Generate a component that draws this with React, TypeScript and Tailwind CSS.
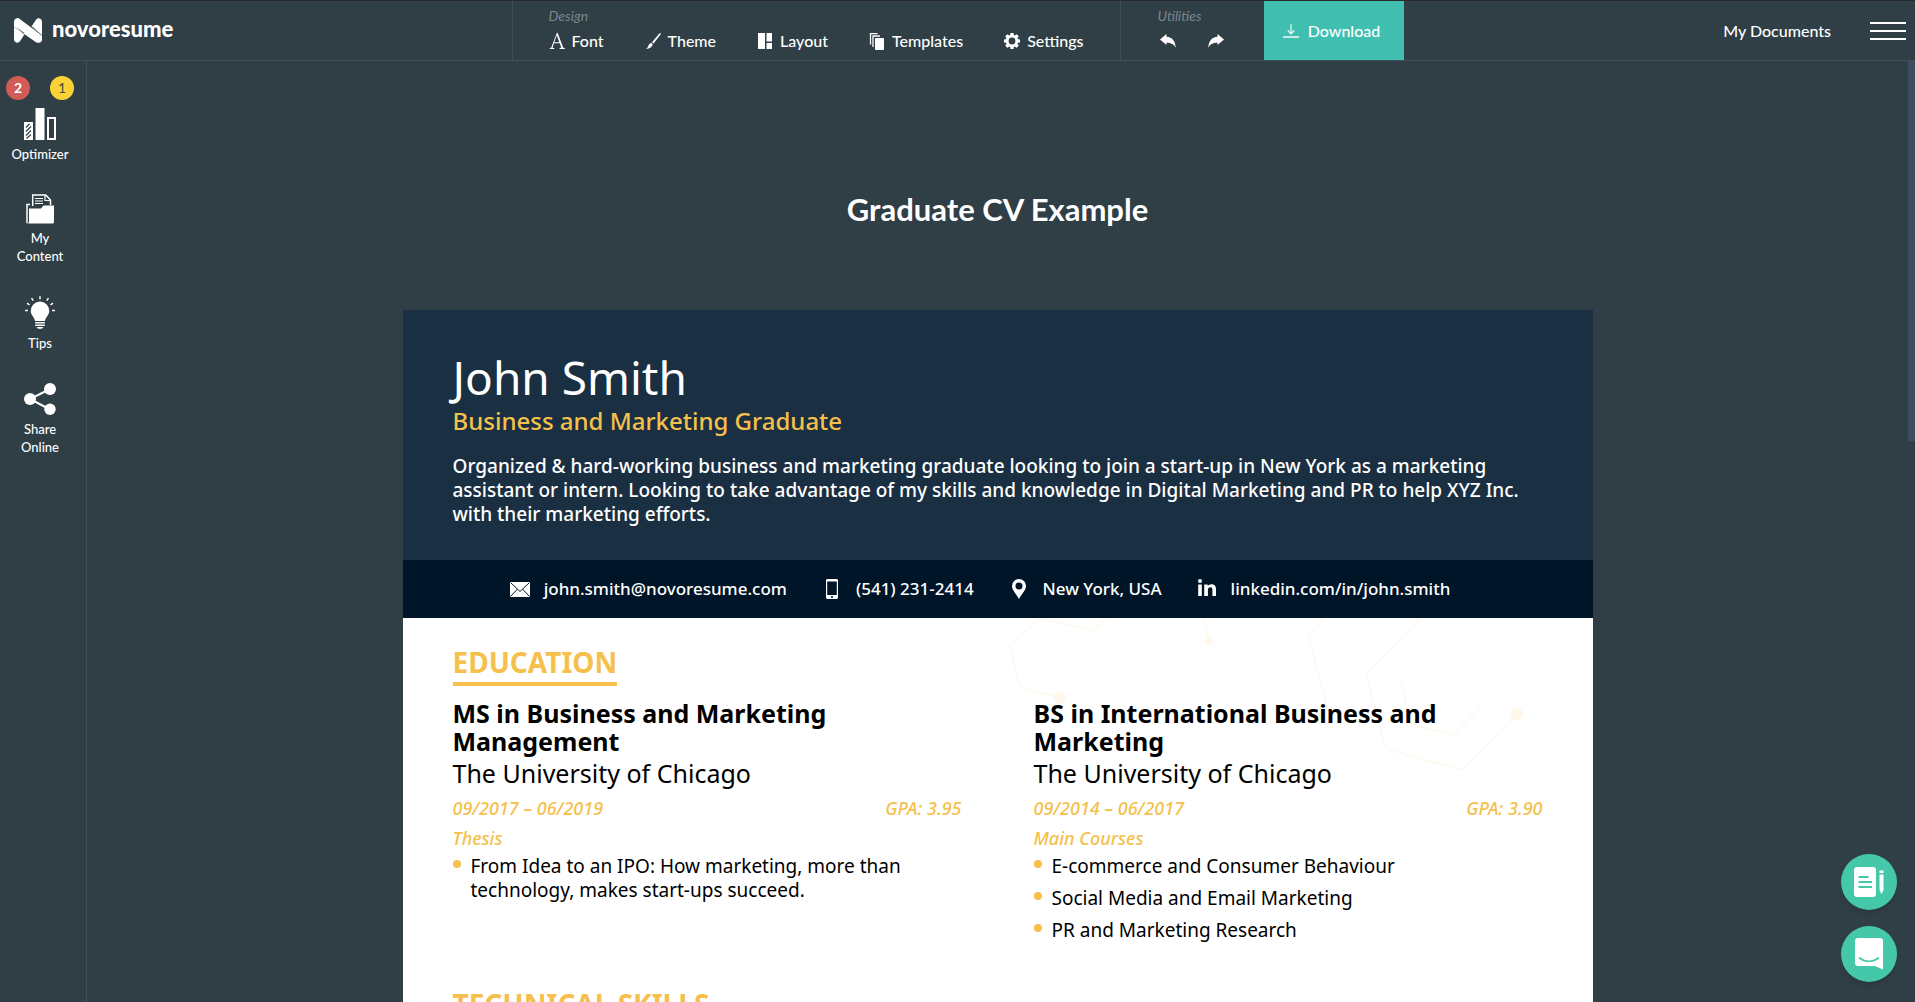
import type { ReactNode } from "react";

/* ---------- Icons ---------- */

const Logo = () => (
  <svg width="28" height="25" viewBox="0 0 28 25" fill="#fff" aria-hidden="true">
    <path d="M0 9 10.500 16.200 6 23.300A3.300 3.300 0 0 1 0 21.500z" />
    <path d="M17.500 8.500 22 1.700A3.300 3.300 0 0 1 28 3.500V17z" />
    <path d="M0 4A3.600 3.600 0 0 1 5.800.9L26.500 16.500a4 4 0 0 1-4.500 7.700L10.500 16.200 0 8.800z" />
    <path d="M2.500 8.800 10.500 15 9.600 16.400zM25.500 16 18.800 8.200 18 9.600z" fill="#7d888e" />
  </svg>
);

const FontIcon = () => (
  <svg width="16" height="16" viewBox="0 0 16 16" fill="#fff" aria-hidden="true">
    <path d="M7.800 0h.9l5.500 14.700 1.600.4v.9h-5.200v-.9l1.700-.4-1.600-4.500H5l-1.500 4.500 1.700.4v.9H.8v-.9l1.400-.4zM7.800 2.300 5.300 9.200h5z" />
  </svg>
);

const BrushIcon = () => (
  <svg width="16" height="16" viewBox="0 0 16 16" fill="#fff" aria-hidden="true">
    <path d="M15.400.1c.5.300.4.800.1 1.400L8.600 10.600 7 9.300 14.400.6c.3-.4.700-.6 1-.5zM6.300 9.900l1.500 1.400C7.200 13.600 5 15.900 1 15.900c1.300-.9 1.900-2 2.500-3.400.6-1.400 1.500-2.500 2.800-2.600z" />
  </svg>
);

const LayoutIcon = () => (
  <svg width="16" height="16" viewBox="0 0 16 16" fill="#fff" aria-hidden="true">
    <path d="M1 0h7v16H1zM9.500 0H15v8.500H9.500zM9.500 10H15v6H9.500z" />
  </svg>
);

const TemplatesIcon = () => (
  <svg width="16" height="17" viewBox="0 0 16 17" fill="none" stroke="#fff" aria-hidden="true">
    <path d="M1.500 11.500v-11h7M4 14V3h7" strokeWidth="1.300" />
    <path d="M6.500 5.500h8v11h-8z" fill="#fff" />
  </svg>
);

const GearIcon = () => (
  <svg width="16" height="16" viewBox="0 0 16 16" aria-hidden="true">
    <g fill="#fff">
      <circle cx="8" cy="8" r="6.200" />
      {[0, 45, 90, 135].map((a) => (
        <rect key={a} x="6.300" y="0" width="3.400" height="16" rx=".6" transform={`rotate(${a} 8 8)`} />
      ))}
    </g>
    <circle cx="8" cy="8" r="3.400" fill="#303e46" />
  </svg>
);

const UndoIcon = ({ flip = false }: { flip?: boolean }) => (
  <svg width="16" height="14" viewBox="0 0 16 14" fill="#fff" aria-hidden="true" className={flip ? "-scale-x-100" : ""}>
    <path d="M0 5.500 6.500 0v2.700c5.600.2 9 4.500 9.200 11.100-1.800-3.600-4.500-4.900-9.200-5V11z" />
  </svg>
);

const DownloadIcon = () => (
  <svg width="16" height="14" viewBox="0 0 16 14" fill="none" stroke="#fff" aria-hidden="true">
    <path d="M8 0v9.500M4.800 6.500 8 9.700l3.200-3.200" strokeWidth="1.100" />
    <path d="M0 13h16" strokeWidth="1.400" />
  </svg>
);

const OptimizerIcon = () => (
  <svg width="32" height="32" viewBox="0 0 32 32" aria-hidden="true">
    <path d="M0 14h9v18H0zM11.500 0h9v32h-9z" fill="#fff" />
    <path d="M2 19.500 5.500 16M2 23.500l5-5M2 27.500l5-5M2.500 30.500l4.500-4" stroke="#303e46" strokeWidth="1.200" />
    <path d="M24 10h7v21h-7z" fill="none" stroke="#fff" strokeWidth="2" />
  </svg>
);

const ContentIcon = () => (
  <svg width="28" height="30" viewBox="0 0 28 30" fill="none" stroke="#fff" aria-hidden="true">
    <path d="M4 10.500H1v18.700" strokeWidth="1.500" />
    <path d="M6.700 12V1h13l4.800 5v5" strokeWidth="1.500" />
    <path d="M19 1v5.500h5.500M9 4.500h8M9 7h8M9 9.500h8" strokeWidth="1.200" />
    <path d="M3 14.500h12l2.500-3H28v17l-1 1H2l1-1.500z" fill="#fff" stroke="none" />
  </svg>
);

const BulbIcon = () => (
  <svg width="30" height="33" viewBox="0 0 30 33" fill="#fff" aria-hidden="true">
    <path d="M15 5.500a9.300 9.300 0 0 1 9.300 9.200c0 4.300-3.600 6-4.300 10.300H10c-.7-4.300-4.300-6-4.300-10.300A9.300 9.300 0 0 1 15 5.500zM10.200 26h9.600v1.500h-9.600zM10.200 28.500h9.600V30h-9.600zM11.500 31h7l-1.500 1.700h-4z" />
    <path
      d="M15 .3v3M0 14.500h3M27 14.500h3M6.600 2.200l1.600 2.400M23.400 2.200l-1.600 2.400M2 7.200l2.500 1.600M28 7.200l-2.500 1.600"
      stroke="#fff"
      strokeWidth="1.500"
    />
  </svg>
);

const ShareIcon = () => (
  <svg width="32" height="32" viewBox="0 0 32 32" fill="#fff" aria-hidden="true">
    <path d="M26 6 6 16l20 10.500" fill="none" stroke="#fff" strokeWidth="2" />
    <circle cx="6" cy="16" r="6" />
    <circle cx="26" cy="6" r="6" />
    <circle cx="26" cy="26.300" r="5.700" />
  </svg>
);

const MailIcon = () => (
  <svg width="20" height="15" viewBox="0 0 20 15" aria-hidden="true">
    <rect width="20" height="15" fill="#fff" />
    <path d="M.5.500 10 9.500 19.500.500M.5 14.500l7-7.500M19.500 14.500l-7-7.500" fill="none" stroke="#011528" />
  </svg>
);

const PhoneIcon = () => (
  <svg width="12" height="20" viewBox="0 0 12 20" aria-hidden="true">
    <path fillRule="evenodd" fill="#fff" d="M1 0h10l1 1v18l-1 1H1l-1-1V1zM1.200 2.500v13.500h9.600V2.500zM5 17.200v1.600h2v-1.600z" />
  </svg>
);

const PinIcon = () => (
  <svg width="14" height="20" viewBox="0 0 14 20" aria-hidden="true">
    <path fillRule="evenodd" fill="#fff" d="M7 0a7 7 0 0 1 7 7c0 4-4 7.500-7 13C4 14.500 0 11 0 7a7 7 0 0 1 7-7zM7 3.500a3.500 3.500 0 1 0 0 7 3.500 3.500 0 0 0 0-7z" />
  </svg>
);

const LinkedinIcon = () => (
  <svg width="18" height="17" viewBox="0 0 18 17" fill="#fff" aria-hidden="true" className="mb-1">
    <circle cx="2" cy="2" r="2" />
    <path d="M.2 5.500h3.600V17H.2zM6.200 5.500h3.500v1.600c.6-1.100 1.900-1.900 3.700-1.900 3.500 0 4.600 2.100 4.600 5.300V17h-3.600v-5.800c0-1.700-.4-2.900-2-2.900-1.800 0-2.500 1.200-2.500 2.900V17H6.200z" />
  </svg>
);

const NotesIcon = () => (
  <svg width="30" height="30" viewBox="0 0 30 30" aria-hidden="true">
    <rect width="22" height="30" rx="3" fill="#fff" />
    <path d="M4.500 10h10M4.500 15h13.500M4.500 20h13.500" stroke="#44c8a9" strokeWidth="2" />
    <path d="M25.500 3.500h4v2.500h-4zM25.500 7.500h4V23l-2 4-2-4z" fill="#fff" />
  </svg>
);

const ChatIcon = () => (
  <svg width="28" height="32" viewBox="0 0 28 32" aria-hidden="true">
    <path d="M3 0h22a3 3 0 0 1 3 3v28.500L20 28H3a3 3 0 0 1-3-3V3a3 3 0 0 1 3-3z" fill="#fff" />
    <path d="M4.500 20c5.500 4.300 13.500 4.300 19 0" fill="none" stroke="#44c8a9" strokeWidth="1.600" strokeLinecap="round" />
  </svg>
);

/* Faint molecule lines behind the page content */
const Pattern = () => (
  <svg width="530" height="160" viewBox="0 0 530 160" fill="none" stroke="#fffaf1" strokeWidth="2" aria-hidden="true">
    <path d="M60 80 20 69 10 29 40 0l53 13L106 0M204 0l5 23M324 0l-16 17 20 75M421 0l-55 56 20 75 76 21 55-56M401 65l10 41 41 11 30-30" />
    <g fill="#fff7ea" stroke="none">
      <circle cx="60" cy="80" r="6" />
      <circle cx="209" cy="23" r="4" />
      <circle cx="517" cy="96" r="6" />
    </g>
  </svg>
);

/* ---------- Header ---------- */

const designTools: [string, ReactNode][] = [
  ["Font", <FontIcon />],
  ["Theme", <BrushIcon />],
  ["Layout", <LayoutIcon />],
  ["Templates", <TemplatesIcon />],
  ["Settings", <GearIcon />],
];

const Header = () => (
  <header className="grid h-[61px] shrink-0 grid-cols-[1fr_auto_1fr] border-t border-b border-t-[#282a2b] border-b-[#3d4f5b]">
    <a href="#home" className="flex items-center gap-[10px] pl-[14px]">
      <Logo />
      <span className="pb-1 text-[22px] leading-6 font-black">novoresume</span>
    </a>
    <div className="flex">
      <div className="border-x border-[#3d4f5b] px-9 pt-[5px]">
        <div className="text-sm leading-5 text-[#7b868d] italic">Design</div>
        <div className="mt-[3px] flex gap-[41px]">
          {designTools.map(([label, icon]) => (
            <button key={label} type="button" className="flex items-center gap-[7px] text-base leading-6 font-medium">
              {icon}
              {label}
            </button>
          ))}
        </div>
      </div>
      <div className="pt-[5px] pr-10 pl-[37px]">
        <div className="text-sm leading-5 text-[#7b868d] italic">Utilities</div>
        <div className="mt-[3px] flex h-6 items-center gap-8 pl-0.5">
          <button type="button" aria-label="Undo">
            <UndoIcon />
          </button>
          <button type="button" aria-label="Redo">
            <UndoIcon flip />
          </button>
        </div>
      </div>
      <button
        type="button"
        className="flex w-[140px] items-center justify-center gap-[9px] bg-[#40bfb0] pr-1 text-base font-medium"
      >
        <DownloadIcon />
        Download
      </button>
    </div>
    <div className="flex items-center justify-end gap-[39px] pr-[9px]">
      <a href="#documents" className="text-base font-medium">My Documents</a>
      <button type="button" aria-label="Menu" className="flex w-9 flex-col gap-[6px]">
        <span className="h-0.5 w-full bg-white" />
        <span className="h-0.5 w-full bg-white" />
        <span className="h-0.5 w-full bg-white" />
      </button>
    </div>
  </header>
);

/* ---------- Sidebar ---------- */

const sideItems: [string, ReactNode][] = [
  ["Optimizer", <OptimizerIcon />],
  ["My Content", <ContentIcon />],
  ["Tips", <BulbIcon />],
  ["Share Online", <ShareIcon />],
];

const Sidebar = () => (
  <nav className="flex w-[87px] shrink-0 flex-col border-r border-[#3d4f5b] pt-[15px]">
    <div className="flex justify-between pr-3 pl-[6px] text-center text-sm leading-6">
      <span className="size-6 rounded-full bg-[#d15b56] font-bold">2</span>
      <span className="size-6 rounded-full bg-[#fcd237] text-[#4b4d3c]">1</span>
    </div>
    <div className="mt-2 flex flex-col items-center gap-[31px] pr-[6px]">
      {sideItems.map(([label, icon]) => (
        <button
          key={label}
          type="button"
          className="flex w-14 flex-col items-center gap-[5px] text-[13px] leading-[18px] font-medium"
        >
          {icon}
          {label}
        </button>
      ))}
    </div>
  </nav>
);

/* ---------- Resume page ---------- */

const contacts: [string, ReactNode][] = [
  ["john.smith@novoresume.com", <MailIcon />],
  ["(541) 231-2414", <PhoneIcon />],
  ["New York, USA", <PinIcon />],
  ["linkedin.com/in/john.smith", <LinkedinIcon />],
];

const degrees = [
  {
    title: "MS in Business and Marketing Management",
    dates: "09/2017 – 06/2019",
    gpa: "GPA: 3.95",
    label: "Thesis",
    points: ["From Idea to an IPO: How marketing, more than technology, makes start-ups succeed."],
  },
  {
    title: "BS in International Business and Marketing",
    dates: "09/2014 – 06/2017",
    gpa: "GPA: 3.90",
    label: "Main Courses",
    points: ["E-commerce and Consumer Behaviour", "Social Media and Email Marketing", "PR and Marketing Research"],
  },
];

const SectionTitle = ({ children }: { children: ReactNode }) => (
  <h3 className="w-fit border-b-4 border-[#f5c04b] pb-0.5 text-[28px] leading-9 font-bold text-[#f5c04b]">{children}</h3>
);

const Resume = () => (
  <article className="w-full max-w-[1190px] bg-white font-['Noto_Sans',sans-serif] text-black">
    <div className="bg-[#1a2f42] px-[50px] pt-10 pb-[34px] text-white">
      <h2 className="text-[46px] leading-[54px]">John Smith</h2>
      <p className="mt-px text-2xl leading-8 font-medium text-[#f5c04b]">Business and Marketing Graduate</p>
      <p className="mt-[17px] text-[19px] leading-6 font-medium">
        Organized &amp; hard-working business and marketing graduate looking to join a start-up in New York as a marketing
        assistant or intern. Looking to take advantage of my skills and knowledge in Digital Marketing and PR to help XYZ
        Inc. with their marketing efforts.
      </p>
    </div>
    <ul className="flex h-[58px] items-center justify-center bg-[#011528] text-[17px] leading-6 font-medium text-white">
      {contacts.map(([text, icon]) => (
        <li key={text} className="mr-[35px] flex items-center gap-[14px]">
          <span className="flex w-5 justify-center">{icon}</span>
          {text}
        </li>
      ))}
    </ul>
    <div className="relative px-[50px] pt-[26px] pb-10">
      <div className="absolute top-0 right-[63px]">
        <Pattern />
      </div>
      <section className="relative">
        <SectionTitle>EDUCATION</SectionTitle>
        <div className="mt-[13px] grid grid-cols-2 gap-[72px]">
          {degrees.map((d) => (
            <div key={d.title}>
              <h4 className="text-[25px] leading-7 font-bold">{d.title}</h4>
              <p className="mt-0.5 text-[25px] leading-8">The University of Chicago</p>
              <div className="mt-[7px] flex justify-between text-lg leading-6 font-medium text-[#f5c04b] italic">
                <span>{d.dates}</span>
                <span>{d.gpa}</span>
              </div>
              <p className="mt-[6px] text-lg leading-6 font-medium text-[#f5c04b] italic">{d.label}</p>
              <ul className="mt-1 flex flex-col gap-2 text-[19px] leading-6">
                {d.points.map((p) => (
                  <li key={p} className="flex gap-[10px] pr-10">
                    <span className="mt-[6px] size-2 shrink-0 rounded-full bg-[#f5c04b]" />
                    {p}
                  </li>
                ))}
              </ul>
            </div>
          ))}
        </div>
      </section>
      <section className="relative mt-11">
        <SectionTitle>TECHNICAL SKILLS</SectionTitle>
      </section>
    </div>
  </article>
);

export default function App() {
  return (
    <div className="flex h-screen flex-col overflow-hidden bg-[#303e46] font-['Lato',sans-serif] text-white">
      <Header />
      <div className="flex min-h-0 flex-1">
        <Sidebar />
        <main className="flex min-w-0 flex-1 flex-col items-center overflow-hidden">
          <h1 className="shrink-0 pt-32 pb-[81px] text-[31px] leading-10 font-bold">Graduate CV Example</h1>
          <Resume />
        </main>
        <div className="w-[7px] shrink-0" aria-hidden="true">
          <div className="h-[380px] bg-[#3d4f5e]" />
        </div>
      </div>
      <div className="fixed right-[18px] bottom-5 flex flex-col gap-4">
        <button type="button" aria-label="Notes" className="flex size-14 items-center justify-center rounded-full bg-[#44c8a9] shadow-md">
          <NotesIcon />
        </button>
        <button type="button" aria-label="Chat" className="flex size-14 items-center justify-center rounded-full bg-[#44c8a9] shadow-md">
          <ChatIcon />
        </button>
      </div>
    </div>
  );
}
